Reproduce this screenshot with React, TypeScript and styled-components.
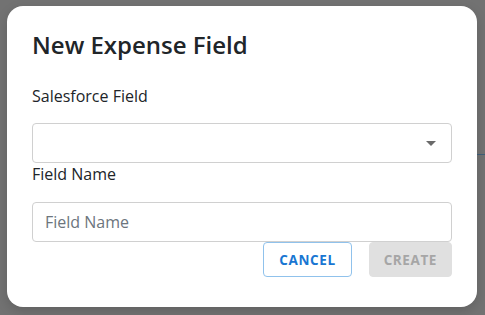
import React from "react";
import styled, { createGlobalStyle } from "styled-components";

const Global = createGlobalStyle`
  html, body { margin: 0; padding: 0; background: #727272; }
  body { font-family: "Open Sans", "Noto Sans", sans-serif; }
  * { box-sizing: border-box; }
`;

const Overlay = styled.div`
  width: 485px;
  height: 315px;
  padding: 6px 8px 8px 7px;
  background: #727272;
  position: relative;
  overflow: hidden;
`;

const BgLine = styled.div`
  position: absolute;
  right: 0;
  top: 154px;
  width: 10px;
  height: 1px;
  background: #3f5f7a;
`;

const Dialog = styled.div`
  position: relative;
  width: 470px;
  height: 301px;
  background: #fff;
  border-radius: 16px;
  padding: 23px 25px 0 25px;
  display: flex;
  flex-direction: column;
  box-shadow: 0 4px 12px rgba(0, 0, 0, 0.15);
`;

const Title = styled.h2`
  margin: 0;
  font-size: 24px;
  line-height: 32px;
  font-weight: 600;
  color: #212529;
`;

const Label = styled.label<{ $mt: number }>`
  display: block;
  margin-top: ${(p) => p.$mt}px;
  font-size: 16px;
  line-height: 22px;
  color: #212529;
`;

const FieldBox = styled.div<{ $mt: number }>`
  margin-top: ${(p) => p.$mt}px;
  height: 40px;
  border: 1px solid #d0d0d0;
  border-radius: 4px;
  display: flex;
  align-items: center;
  padding: 0 12px;
  position: relative;
`;

const Input = styled.input`
  border: none;
  outline: none;
  width: 100%;
  font-family: inherit;
  font-size: 16px;
  color: #212529;
  background: transparent;
  padding: 0;
  &::placeholder { color: #6c757d; }
`;

const Caret = styled.div`
  margin-left: auto;
  width: 0;
  height: 0;
  border-left: 5px solid transparent;
  border-right: 5px solid transparent;
  border-top: 5px solid #6a6a6a;
  margin-right: 3px;
`;

const Actions = styled.div`
  display: flex;
  justify-content: flex-end;
  gap: 17px;
`;

const Button = styled.button<{ $variant: "outline" | "disabled" }>`
  height: 35px;
  border-radius: 4px;
  font-family: inherit;
  font-size: 13.5px;
  font-weight: 700;
  letter-spacing: 0.6px;
  text-transform: uppercase;
  padding: 0 ${(p) => (p.$variant === "outline" ? 15 : 14)}px;
  cursor: pointer;
  ${(p) =>
    p.$variant === "outline"
      ? `background: #fff; color: #1976d2; border: 1px solid #90c2ec;`
      : `background: #e0e0e0; color: #a6a6a6; border: 1px solid #e0e0e0;`}
`;

export default function App() {
  return (
    <>
      <Global />
      <Overlay>
        <BgLine />
        <Dialog>
          <Title>New Expense Field</Title>
          <Label $mt={24}>Salesforce Field</Label>
          <FieldBox $mt={16}>
            <Caret />
          </FieldBox>
          <Label $mt={0}>Field Name</Label>
          <FieldBox $mt={17}>
            <Input placeholder="Field Name" />
          </FieldBox>
          <Actions>
            <Button $variant="outline">Cancel</Button>
            <Button $variant="disabled" disabled>Create</Button>
          </Actions>
        </Dialog>
      </Overlay>
    </>
  );
}
